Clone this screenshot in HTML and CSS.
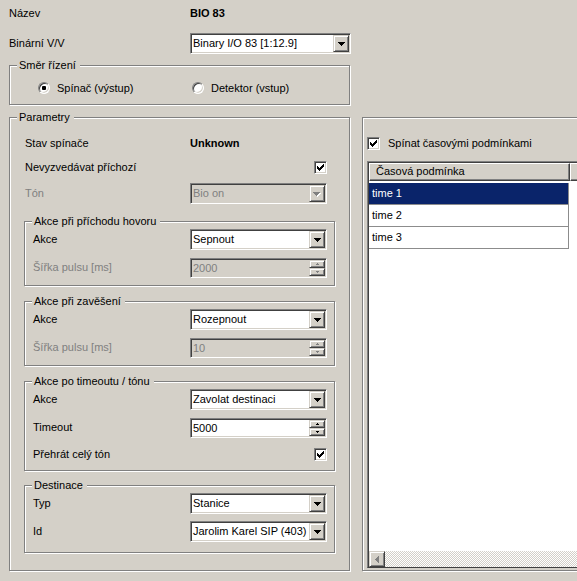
FILE: index.html
```html
<!DOCTYPE html>
<html lang="cs">
<head>
<meta charset="utf-8">
<title>BIO 83</title>
<link rel="stylesheet" href="styles.css">
</head>
<body>
<div class="page">
  <div class="top">
    <div class="row r-name"><span>Název</span><b class="strong">BIO 83</b></div>
    <div class="row r-bin">
      <span>Binární V/V</span>
      <div class="combo"><span class="val">Binary I/O 83 [1:12.9]</span><span class="btn raised"><svg class="ar" width="7" height="4" viewBox="0 0 7 4"><path d="M0 0h7v1h-1v1h-1v1h-1v1h-1v-1h-1v-1h-1v-1h-1z"/></svg></span></div>
    </div>
    <div class="group smer">
      <div class="gtitle">Směr řízení</div>
      <div class="radios">
        <div class="radio-item"><span class="radio on"></span><span>Spínač (výstup)</span></div>
        <div class="radio-item"><span class="radio"></span><span>Detektor (vstup)</span></div>
      </div>
    </div>
  </div>

  <div class="bottom">
    <div class="group params">
      <div class="gtitle">Parametry</div>
      <div class="prow r-stav"><span>Stav spínače</span><b class="strong">Unknown</b></div>
      <div class="prow r-nev"><span>Nevyzvedávat příchozí</span><span class="check"><svg width="7" height="7" viewBox="0 0 7 7"><path d="M6 0h1v1h-1zM5 1h2v1h-2zM0 2h1v1h-1zM4 2h3v1h-3zM0 3h2v1h-2zM3 3h3v1h-3zM0 4h5v1h-5zM1 5h3v1h-3zM2 6h1v1h-1z"/></svg></span></div>
      <div class="prow r-ton"><span class="dim">Tón</span>
        <div class="combo dis"><span class="val">Bio on</span><span class="btn raised"><svg width="8" height="5" viewBox="0 0 8 5"><path fill="#fff" d="M1 1h7v1h-1v1h-1v1h-1v1h-1v-1h-1v-1h-1v-1h-1z"/><path fill="#808080" d="M0 0h7v1h-1v1h-1v1h-1v1h-1v-1h-1v-1h-1v-1h-1z"/></svg></span></div>
      </div>

      <div class="group sub s1">
        <div class="gtitle">Akce při příchodu hovoru</div>
        <div class="srow first"><span>Akce</span>
          <div class="combo"><span class="val">Sepnout</span><span class="btn raised"><svg width="7" height="4" viewBox="0 0 7 4"><path d="M0 0h7v1h-1v1h-1v1h-1v1h-1v-1h-1v-1h-1v-1h-1z"/></svg></span></div>
        </div>
        <div class="srow"><span class="dim">Šířka pulsu [ms]</span>
          <div class="spin dis"><span class="val">2000</span><span class="btns"><span class="sbtn up raised"><svg width="3" height="2" viewBox="0 0 3 2"><path fill="#808080" d="M1 0h1v1h1v1h-3v-1h1z"/></svg></span><span class="sbtn dn raised"><svg width="3" height="2" viewBox="0 0 3 2"><path fill="#808080" d="M0 0h3v1h-1v1h-1v-1h-1z"/></svg></span></span></div>
        </div>
      </div>

      <div class="group sub s2">
        <div class="gtitle">Akce při zavěšení</div>
        <div class="srow first"><span>Akce</span>
          <div class="combo"><span class="val">Rozepnout</span><span class="btn raised"><svg width="7" height="4" viewBox="0 0 7 4"><path d="M0 0h7v1h-1v1h-1v1h-1v1h-1v-1h-1v-1h-1v-1h-1z"/></svg></span></div>
        </div>
        <div class="srow"><span class="dim">Šířka pulsu [ms]</span>
          <div class="spin dis"><span class="val">10</span><span class="btns"><span class="sbtn up raised"><svg width="3" height="2" viewBox="0 0 3 2"><path fill="#808080" d="M1 0h1v1h1v1h-3v-1h1z"/></svg></span><span class="sbtn dn raised"><svg width="3" height="2" viewBox="0 0 3 2"><path fill="#808080" d="M0 0h3v1h-1v1h-1v-1h-1z"/></svg></span></span></div>
        </div>
      </div>

      <div class="group sub s3">
        <div class="gtitle">Akce po timeoutu / tónu</div>
        <div class="srow first"><span>Akce</span>
          <div class="combo"><span class="val">Zavolat destinaci</span><span class="btn raised"><svg width="7" height="4" viewBox="0 0 7 4"><path d="M0 0h7v1h-1v1h-1v1h-1v1h-1v-1h-1v-1h-1v-1h-1z"/></svg></span></div>
        </div>
        <div class="srow"><span>Timeout</span>
          <div class="spin"><span class="val">5000</span><span class="btns"><span class="sbtn up raised"><svg width="3" height="2" viewBox="0 0 3 2"><path d="M1 0h1v1h1v1h-3v-1h1z"/></svg></span><span class="sbtn dn raised"><svg width="3" height="2" viewBox="0 0 3 2"><path d="M0 0h3v1h-1v1h-1v-1h-1z"/></svg></span></span></div>
        </div>
        <div class="srow r-play"><span>Přehrát celý tón</span><span class="check"><svg width="7" height="7" viewBox="0 0 7 7"><path d="M6 0h1v1h-1zM5 1h2v1h-2zM0 2h1v1h-1zM4 2h3v1h-3zM0 3h2v1h-2zM3 3h3v1h-3zM0 4h5v1h-5zM1 5h3v1h-3zM2 6h1v1h-1z"/></svg></span></div>
      </div>

      <div class="group sub s4">
        <div class="gtitle">Destinace</div>
        <div class="srow first"><span>Typ</span>
          <div class="combo"><span class="val">Stanice</span><span class="btn raised"><svg width="7" height="4" viewBox="0 0 7 4"><path d="M0 0h7v1h-1v1h-1v1h-1v1h-1v-1h-1v-1h-1v-1h-1z"/></svg></span></div>
        </div>
        <div class="srow"><span>Id</span>
          <div class="combo"><span class="val">Jarolim Karel SIP (403)</span><span class="btn raised"><svg width="7" height="4" viewBox="0 0 7 4"><path d="M0 0h7v1h-1v1h-1v1h-1v1h-1v-1h-1v-1h-1v-1h-1z"/></svg></span></div>
        </div>
      </div>
    </div>

    <div class="group right">
      <div class="crow"><span class="check"><svg width="7" height="7" viewBox="0 0 7 7"><path d="M6 0h1v1h-1zM5 1h2v1h-2zM0 2h1v1h-1zM4 2h3v1h-3zM0 3h2v1h-2zM3 3h3v1h-3zM0 4h5v1h-5zM1 5h3v1h-3zM2 6h1v1h-1z"/></svg></span><span>Spínat časovými podmínkami</span></div>
      <div class="lv">
        <div class="lv-head">
          <div class="hcell">Časová podmínka</div>
          <div class="hcell fill"></div>
        </div>
        <div class="lv-rows">
          <div class="lvrow sel">time 1</div>
          <div class="lvrow">time 2</div>
          <div class="lvrow">time 3</div>
        </div>
        <div class="hscroll">
          <span class="sb-btn raised"><svg width="4" height="7" viewBox="0 0 4 7"><path fill="#808080" d="M0 3h1v-1h1v-1h1v-1h1v7h-1v-1h-1v-1h-1v-1h-1z"/></svg></span>
        </div>
      </div>
    </div>
  </div>
</div>
</body>
</html>
```

FILE: styles.css
```css
* { box-sizing: border-box; }

html, body {
  margin: 0;
  overflow: hidden;
}

body {
  width: 577px;
  height: 581px;
  background: #d4d0c8;
  color: #000;
  font: 11px/13px "Liberation Sans", Arial, sans-serif;
}

.page {
  width: 577px;
  padding: 3px 0 0 9px;
}

.top { width: 342px; }

.strong { font-weight: bold; }
.dim { color: #808080; }

.row {
  display: grid;
  grid-template-columns: 1fr 161px;
  align-items: center;
  height: 21px;
}

.r-bin { margin-top: 9px; }

/* etched group box */
.group {
  border: 1px solid #808080;
  box-shadow: inset 1px 1px #fff, 1px 1px #fff;
}

.gtitle {
  width: max-content;
  height: 14px;
  margin: -8px 0 0 7px;
  padding: 0 4px 0 2px;
  line-height: 14px;
  background: #d4d0c8;
}

.smer {
  width: 341px;
  margin-top: 11px;
  padding-bottom: 9px;
}

.radios {
  display: grid;
  grid-template-columns: 154px auto;
  align-items: center;
  height: 14px;
  margin: 9px 0 0 28px;
}

.radio-item {
  display: flex;
  align-items: center;
  gap: 7px;
}

.radio {
  width: 12px;
  height: 12px;
  border-radius: 50%;
  border: 1px solid;
  border-color: #808080 #fff #fff #808080;
  box-shadow: inset 1px 1px #404040, inset -1px -1px #d4d0c8;
  background: #fff;
  display: flex;
  align-items: center;
  justify-content: center;
}

.radio.on::after {
  content: "";
  width: 4px;
  height: 4px;
  border-radius: 1px;
  background: #000;
}

.bottom {
  display: flex;
  align-items: stretch;
  gap: 12px;
  margin-top: 12px;
}

.params {
  flex: none;
  width: 341px;
  padding-bottom: 17px;
}

.prow {
  display: grid;
  grid-template-columns: 1fr 137px;
  align-items: center;
  margin: 0 22px 0 15px;
}

.r-stav { margin-top: 9px; height: 20px; }
.r-nev  { margin-top: 4px; height: 20px; }
.r-ton  { margin-top: 6px; height: 21px; }

.sub { margin: 15px 14px 0; }
.s1 { margin-top: 17px; padding-bottom: 7px; }
.s2 { padding-bottom: 7px; }
.s3 { padding-bottom: 5px; }
.s4 { margin-top: 14px; padding-bottom: 10px; }

.srow {
  display: grid;
  grid-template-columns: 1fr 137px;
  align-items: center;
  height: 21px;
  margin: 7px 7px 0 8px;
}

.srow.first { margin-top: 1px; }
.srow.r-play { margin-top: 6px; }

/* 3D pieces */
.raised {
  background: #d4d0c8;
  border: 1px solid;
  border-color: #d4d0c8 #404040 #404040 #d4d0c8;
  box-shadow: inset 1px 1px #fff, inset -1px -1px #808080;
}

.combo, .spin {
  display: flex;
  height: 21px;
  padding: 1px;
  border: 1px solid;
  border-color: #808080 #fff #fff #808080;
  box-shadow: inset 1px 1px #404040, inset -1px -1px #d4d0c8;
  background: #fff;
}

.spin { height: 20px; }

.combo .val, .spin .val {
  flex: 1;
  min-width: 0;
  padding-left: 1px;
  line-height: 17px;
  white-space: nowrap;
  overflow: hidden;
}

.spin .val { line-height: 16px; }

.combo.dis, .spin.dis { background: #d4d0c8; }
.combo.dis .val, .spin.dis .val { color: #808080; }

.combo .btn {
  flex: none;
  width: 16px;
  height: 17px;
  display: flex;
  align-items: center;
  justify-content: center;
  padding-top: 1px;
}

.combo .btn svg, .sbtn svg, .sb-btn svg, .check svg { display: block; }

.btns {
  flex: none;
  width: 16px;
  display: flex;
  flex-direction: column;
}

.sbtn {
  flex: 1;
  display: flex;
  align-items: center;
  justify-content: center;
}

.check {
  justify-self: end;
  width: 13px;
  height: 13px;
  border: 1px solid;
  border-color: #808080 #fff #fff #808080;
  box-shadow: inset 1px 1px #404040, inset -1px -1px #d4d0c8;
  background: #fff;
  padding: 2px 0 0 2px;
}

/* right panel: continues past the window's right edge */
.right {
  flex: none;
  width: 215px;
  border-right: 0;
  display: flex;
  flex-direction: column;
  padding: 19px 0 2px 4px;
}

.crow {
  display: flex;
  align-items: center;
  gap: 8px;
  height: 13px;
}

.lv {
  flex: 1;
  margin-top: 11px;
  display: flex;
  flex-direction: column;
  background: #fff;
  border-top: 1px solid #808080;
  border-left: 1px solid #808080;
  border-bottom: 1px solid #404040;
  box-shadow: inset 1px 1px #404040;
  padding: 1px 0 0 1px;
}

.lv-head {
  flex: none;
  display: flex;
  height: 18px;
}

.hcell {
  width: 201px;
  flex: none;
  background: #d4d0c8;
  border: 1px solid;
  border-color: #fff #404040 #404040 #fff;
  box-shadow: inset -1px -1px #808080;
  padding-left: 6px;
  line-height: 15px;
  white-space: nowrap;
}

.hcell.fill {
  flex: 1;
  width: auto;
  border-right: 0;
  box-shadow: inset 0 -1px #808080;
}

.lv-rows {
  flex: 1;
  padding-top: 2px;
}

.lvrow {
  width: 200px;
  height: 22px;
  padding-left: 3px;
  line-height: 21px;
  border-right: 1px solid #8c8c8c;
  border-bottom: 1px solid #8c8c8c;
}

.lvrow.sel {
  background: #0a246a;
  color: #fff;
}

.hscroll {
  flex: none;
  height: 16px;
  display: flex;
  background-color: #fff;
  background-image: repeating-conic-gradient(#d4d0c8 0 25%, #fff 0 50%);
  background-size: 2px 2px;
}

.sb-btn {
  width: 16px;
  height: 16px;
  display: flex;
  align-items: center;
  justify-content: center;
}
```
